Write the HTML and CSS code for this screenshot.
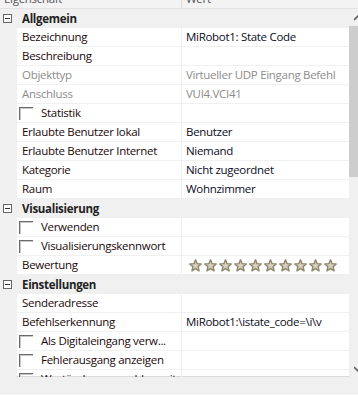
FILE: index.html
```html
<!DOCTYPE html>
<html lang="de">
<head>
    <meta charset="UTF-8" />
    <title>Eigenschaften</title>
    <link rel="stylesheet" href="styles.css">
</head>
<body>
    <div class="grid-header">
        <div class="head-cell head-name">Eigenschaft</div>
        <div class="head-cell head-value">Wert</div>
    </div>

    <div class="main">
        <div class="props">
            <div class="group"><span class="toggle"></span>Allgemein</div>
            <div class="row"><div class="gutter"></div><div class="name">Bezeichnung</div><div class="value">MiRobot1: State Code</div></div>
            <div class="row"><div class="gutter"></div><div class="name">Beschreibung</div><div class="value"></div></div>
            <div class="row readonly"><div class="gutter"></div><div class="name">Objekttyp</div><div class="value">Virtueller UDP Eingang Befehl</div></div>
            <div class="row readonly"><div class="gutter"></div><div class="name">Anschluss</div><div class="value">VUI4.VCI41</div></div>
            <div class="row"><div class="gutter"></div><div class="name"><span class="check"></span>Statistik</div><div class="value"></div></div>
            <div class="row"><div class="gutter"></div><div class="name">Erlaubte Benutzer lokal</div><div class="value">Benutzer</div></div>
            <div class="row"><div class="gutter"></div><div class="name">Erlaubte Benutzer Internet</div><div class="value">Niemand</div></div>
            <div class="row"><div class="gutter"></div><div class="name">Kategorie</div><div class="value">Nicht zugeordnet</div></div>
            <div class="row"><div class="gutter"></div><div class="name">Raum</div><div class="value">Wohnzimmer</div></div>

            <div class="group"><span class="toggle"></span>Visualisierung</div>
            <div class="row"><div class="gutter"></div><div class="name"><span class="check"></span>Verwenden</div><div class="value"></div></div>
            <div class="row"><div class="gutter"></div><div class="name"><span class="check"></span>Visualisierungskennwort</div><div class="value"></div></div>
            <div class="row"><div class="gutter"></div><div class="name">Bewertung</div>
                <div class="value stars" id="stars"></div>
            </div>

            <div class="group"><span class="toggle"></span>Einstellungen</div>
            <div class="row"><div class="gutter"></div><div class="name">Senderadresse</div><div class="value"></div></div>
            <div class="row"><div class="gutter"></div><div class="name">Befehlserkennung</div><div class="value">MiRobot1:\istate_code=\i\v</div></div>
            <div class="row"><div class="gutter"></div><div class="name"><span class="check"></span>Als Digitaleingang verw...</div><div class="value"></div></div>
            <div class="row"><div class="gutter"></div><div class="name"><span class="check"></span>Fehlerausgang anzeigen</div><div class="value"></div></div>
            <div class="row"><div class="gutter"></div><div class="name"><span class="check"></span>Wertänderung melden mit</div><div class="value"></div></div>
        </div>

        <div class="scrollbar">
            <div class="arrow up">
                <svg width="8" height="6" viewBox="0 0 8 6"><path d="M0 5 L4 1 L8 5" fill="none" stroke="#606060" stroke-width="1.6"/></svg>
            </div>
            <div class="thumb"></div>
            <div class="track"></div>
            <div class="arrow down">
                <svg width="8" height="6" viewBox="0 0 8 6"><path d="M0 1 L4 5 L8 1" fill="none" stroke="#606060" stroke-width="1.6"/></svg>
            </div>
        </div>
    </div>

    <div class="footer"></div>

    <script>
        const star = '<svg width="13" height="13" viewBox="0 0 24 24"><path d="M12 1.5 L15 8.6 L22.6 9.2 L16.8 14.2 L18.6 21.8 L12 17.7 L5.4 21.8 L7.2 14.2 L1.4 9.2 L9 8.6 Z" fill="#d6cfbb" stroke="#8f8670" stroke-width="2.6" stroke-linejoin="round"/></svg>';
        document.getElementById('stars').innerHTML = star.repeat(10);
    </script>
</body>
</html>
```

FILE: styles.css
```css
* {
    margin: 0;
    padding: 0;
    box-sizing: border-box;
}
body {
    font-family: 'Open Sans', 'Noto Sans', sans-serif;
    font-size: 11.5px;
    letter-spacing: -0.3px;
    color: #111;
    background: #fff;
    width: 358px;
    height: 396px;
    overflow: hidden;
}
.grid-header {
    display: flex;
    height: 20px;
    margin-top: -11px;
    background: #f3f3f3;
    border-bottom: 1px solid #e3e3e3;
    color: #555;
}
.head-cell {
    line-height: 19px;
    padding-left: 4px;
}
.head-name {
    width: 182px;
    border-right: 1px solid #dcdcdc;
}
.head-value {
    flex: 1;
}
.main {
    display: flex;
    height: 368px;
    overflow: hidden;
}
.props {
    width: 349px;
    flex-shrink: 0;
}
.group {
    display: flex;
    align-items: center;
    height: 19px;
    background: #f0f0f0;
    font-weight: bold;
    color: #222;
}
.toggle {
    position: relative;
    width: 9px;
    height: 9px;
    margin: 0 10px 0 3px;
    border: 1px solid #666;
    background: #fff;
}
.toggle::after {
    content: "";
    position: absolute;
    left: 1px;
    top: 3px;
    width: 5px;
    height: 1px;
    background: #333;
}
.row {
    display: flex;
    height: 19px;
    line-height: 18px;
}
.gutter {
    width: 17px;
    background: #f0f0f0;
}
.name {
    display: flex;
    align-items: center;
    width: 165px;
    padding-left: 5px;
    border-right: 1px solid #f0f0f0;
    border-bottom: 1px solid #f0f0f0;
    white-space: nowrap;
    overflow: hidden;
    color: #1c0808;
}
.value {
    flex: 1;
    padding-left: 4px;
    border-bottom: 1px solid #f0f0f0;
    white-space: nowrap;
    overflow: hidden;
    color: #0c0c1c;
}
.readonly .name,
.readonly .value {
    color: #8c8c8c;
}
.check {
    width: 14px;
    height: 13px;
    margin: 0 8px 0 -3px;
    border-top: 1px solid #6a6a6a;
    border-left: 1px solid #6a6a6a;
    box-shadow: inset 1px 1px 0 #c8c8c8;
    flex-shrink: 0;
}
.stars {
    display: flex;
    align-items: center;
    gap: 2px;
    padding-left: 7px;
}
.scrollbar {
    display: flex;
    flex-direction: column;
    width: 17px;
    flex-shrink: 0;
    background: #f0f0f0;
}
.arrow {
    height: 17px;
    display: flex;
    align-items: center;
    justify-content: center;
}
.thumb {
    height: 151px;
    background: #cdcdcd;
}
.track {
    flex: 1;
}
.footer {
    height: 19px;
    margin-top: -1px;
    border-top: 1px solid #dadada;
    background: #f0f0f0;
}
```
